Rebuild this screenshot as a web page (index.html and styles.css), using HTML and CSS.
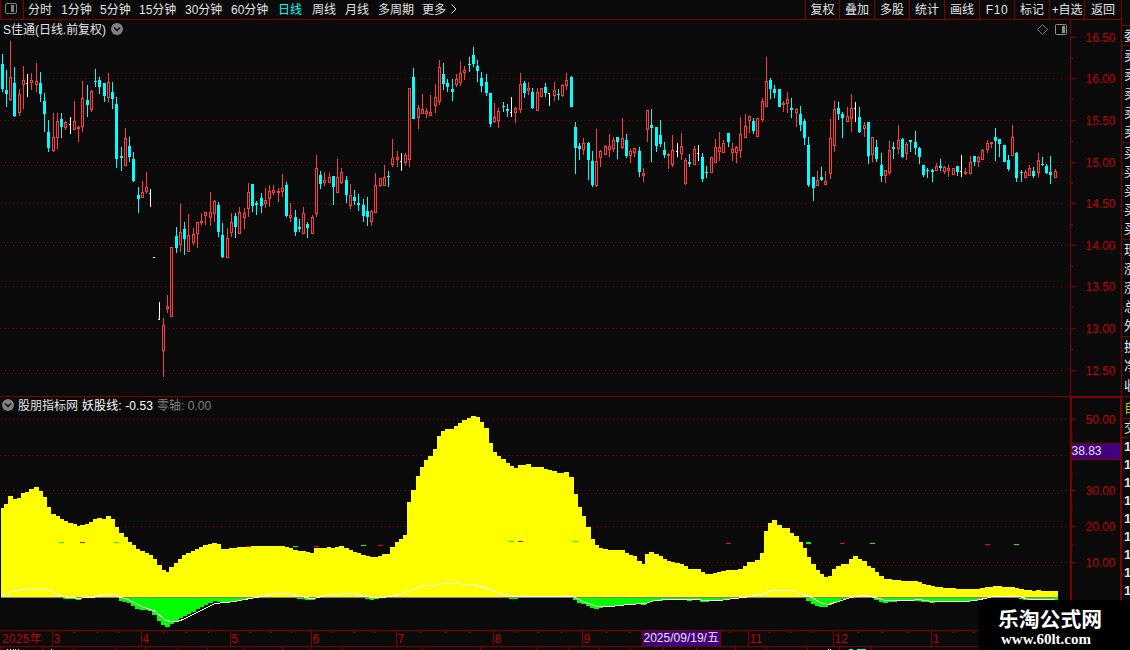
FILE: index.html
```html
<!DOCTYPE html>
<html lang="zh-CN">
  <head>
    <meta charset="UTF-8" />
    <title>S佳通 日线</title>
    <link rel="stylesheet" href="styles.css">
  </head>
  <body>
    <div class="app">
      <main class="main">
        <nav class="toolbar">
          <div class="layout-btn">
            <svg width="14" height="12" viewBox="0 0 14 12">
              <rect x="1.5" y=".5" width="11" height="10" rx="1.5" fill="none" stroke="#808080" />
              <rect x="7" y="2" width="3" height="7" fill="#808080" />
            </svg>
          </div>
          <ul class="periods">
            <li>分时</li>
            <li>1分钟</li>
            <li>5分钟</li>
            <li>15分钟</li>
            <li>30分钟</li>
            <li>60分钟</li>
            <li class="active">日线</li>
            <li>周线</li>
            <li>月线</li>
            <li>多周期</li>
            <li>更多</li>
            <li><svg width="7" height="10" viewBox="0 0 7 10"><path d="M1.5 .5L6 5 1.5 9.5" fill="none" stroke="#d8d8d8" /></svg></li>
          </ul>
          <ul class="tools">
            <li>复权</li>
            <li>叠加</li>
            <li>多股</li>
            <li>统计</li>
            <li>画线</li>
            <li class="latin">F10</li>
            <li>标记</li>
            <li class="tight">+自选</li>
            <li>返回</li>
          </ul>
        </nav>

        <section class="panel price">
          <div class="plot">
            <header class="title">
              <span>S佳通</span><span class="adj">(日线.前复权)</span>
              <svg class="drop" width="12" height="12" viewBox="0 0 12 12">
                <circle cx="6" cy="6" r="6" fill="#808080" />
                <path d="M3 4.5l3 3 3-3" fill="none" stroke="#0a0a0a" stroke-width="1.4" />
              </svg>
              <span class="corner">
                <svg width="11" height="11" viewBox="0 0 11 11"><path d="M5.5 .5l5 5-5 5-5-5z" fill="none" stroke="#808080" /></svg>
                <svg width="12" height="11" viewBox="0 0 12 11">
                  <rect x=".5" y=".5" width="11" height="10" rx="1" fill="none" stroke="#909090" />
                  <rect x="7" y="2" width="3" height="7" fill="#909090" />
                </svg>
              </span>
            </header>
            <svg id="candles" width="1070" height="358" viewBox="0 38 1070 358"></svg>
          </div>
          <svg id="priceAxis" class="axis" width="52" height="376" viewBox="1070 20 52 376"></svg>
        </section>

        <section class="panel indicator">
          <div class="plot">
            <header class="title">
              <svg class="drop" width="12" height="12" viewBox="0 0 12 12">
                <circle cx="6" cy="6" r="6" fill="#808080" />
                <path d="M3 4.5l3 3 3-3" fill="none" stroke="#0a0a0a" stroke-width="1.4" />
              </svg>
              <span class="name">股朋指标网</span>
              <span class="line1">妖股线: -0.53</span>
              <span class="line2">零轴: 0.00</span>
            </header>
            <svg id="area" width="1070" height="217" viewBox="0 413 1070 217"></svg>
          </div>
          <svg id="indAxis" class="axis" width="52" height="234" viewBox="1070 396 52 234"></svg>
        </section>

        <svg id="timeline" width="1122" height="20" viewBox="0 630 1122 20"></svg>
      </main>

      <aside class="quote">
        <ul class="h20"><li>委</li></ul>
        <ul class="h97"><li>卖</li><li>卖</li><li>卖</li><li>卖</li><li>卖</li></ul>
        <ul class="h97"><li>买</li><li>买</li><li>买</li><li>买</li><li>买</li></ul>
        <ul class="h97"><li>现</li><li>涨</li><li>涨</li><li>总</li><li>外</li></ul>
        <ul class="h60"><li>换</li><li>净</li><li>收</li></ul>
        <ul class="h22 own"><li>自</li></ul>
        <ul class="h19"><li>交</li></ul>
        <ul class="ticks"><li>1</li><li>1</li><li>1</li><li>1</li><li>1</li><li>1</li><li>1</li><li>1</li><li>1</li></ul>
      </aside>
    </div>

    <div class="brand">
      <strong>乐淘公式网</strong>
      <b>www.60lt.com</b>
    </div>

    <script src="chart.js"></script>
  </body>
</html>
```
FILE: styles.css
```css
* {
  box-sizing: border-box;
}
body {
  margin: 0;
  background: #0a0a0a;
  color: #e4e4e4;
  font: 12px/19px "Liberation Sans", "Noto Sans CJK SC", sans-serif;
  overflow: hidden;
}
ul {
  margin: 0;
  padding: 0;
  list-style: none;
}
svg {
  display: block;
}
.app {
  display: grid;
  grid-template-columns: 1122px 8px;
  width: 1130px;
  height: 650px;
  overflow: hidden;
}
.main {
  display: flex;
  flex-direction: column;
}

/* toolbar */
.toolbar {
  display: flex;
  height: 20px;
  border-bottom: 1px solid #800000;
  border-left: 1px solid #800000;
  border-right: 1px solid #800000;
}
.toolbar li {
  line-height: 21px;
  height: 19px;
}
.layout-btn {
  width: 23px;
  padding: 3px 0 0 3px;
  border-right: 1px solid #800000;
}
.periods {
  display: grid;
  grid-template-columns: 33px 39px 39px 46px 46px 47px 34px 33px 33px 44px 28px 8px;
  padding-left: 4px;
  white-space: nowrap;
}
.periods svg {
  margin-top: 4px;
}
.active {
  color: #00ffff;
}
.tools {
  display: grid;
  grid-template-columns: 34px repeat(7, 35px) 37px;
  margin-left: auto;
  text-align: center;
  white-space: nowrap;
}
.tools li {
  border-left: 1px solid #800000;
}
.tools .latin {
  letter-spacing: 0.6px;
}
.tools .tight {
  letter-spacing: -0.2px;
}

/* chart panels */
.panel {
  display: flex;
}
.plot {
  width: 1070px;
}
.title {
  display: flex;
  align-items: center;
  height: 18px;
  padding-left: 3px;
  white-space: nowrap;
}
.title > span {
  line-height: 16px;
  padding-top: 2px;
}
.adj {
  letter-spacing: -0.05px;
}
.price .drop {
  margin-left: 5px;
}
.title > .corner {
  display: flex;
  gap: 7px;
  margin-left: auto;
  padding: 0 3px 0 0;
}
.indicator .plot {
  border-top: 1px solid #800000;
}
.indicator .title {
  height: 16px;
  padding-left: 2px;
}
.name {
  margin-left: 4px;
}
.line1 {
  margin-left: 4px;
  color: #fff;
  letter-spacing: 0.1px;
}
.line2 {
  margin-left: 4px;
  color: #808080;
}
.axis text,
#timeline text {
  font-size: 12px;
  fill: #c00000;
}
.axis .cursor,
#timeline .cursor {
  fill: #e4e4e4;
}
#timeline text {
  letter-spacing: 0.2px;
}
#timeline .cursor {
  letter-spacing: 0;
}

/* quote column, cut off by the window edge */
.quote {
  padding-top: 25px;
  overflow: hidden;
}
.quote ul {
  display: flex;
  flex-direction: column;
  justify-content: space-around;
  border-top: 1px solid #800000;
  padding-left: 2px;
}
.quote li {
  width: 13px;
  font-size: 13px;
  line-height: 16px;
}
.h20 { height: 20px; }
.h97 { height: 97px; }
.h60 { height: 60px; }
.h22 { height: 22px; }
.h19 { height: 19px; }
.quote .own {
  color: #c0c000;
}
.quote .ticks {
  height: 163px;
}
.ticks li {
  font-weight: bold;
}

/* site label over the bottom right corner */
.brand {
  position: absolute;
  left: 978px;
  top: 600px;
  width: 152px;
  height: 50px;
  padding: 5px 8px 0 0;
  background: #000;
  color: #fff;
  text-align: center;
}
.brand strong {
  display: block;
  font: bold 20.8px/26px "Noto Sans CJK SC", sans-serif;
}
.brand b {
  display: block;
  margin-right: 8px;
  font: bold 15px/16px "Liberation Serif", serif;
}
```
FILE: chart.js
```js
const RED = "#ff3c3c";
const CYAN = "#00ffff";
const GRID = "#800000";

// type, high, body top, body bottom, low (u = up, d = down, w = flat)
const candles = `
d 54 64 89 92|d 70 90 94 107|u 41 77 100 101|d 67 83 116 117|u 89 94 113 116|u 66 80 85 109|w 74 83 84 97|u 73 80 83 90
u 63 81 85 92|d 72 83 94 102|d 93 101 114 132|d 120 132 148 152|u 113 137 151 152|u 113 121 138 149|d 113 119 127 138|u 121 122 128 130
w 117 124 125 134|u 101 121 130 130|u 126 127 129 142|u 81 98 127 132|d 85 100 105 117|u 90 91 110 112|d 69 81 82 87|d 77 80 87 94
d 83 83 96 102|u 73 82 98 102|d 82 92 99 109|d 97 104 159 168|d 147 156 158 171|u 128 138 166 166|d 137 146 157 162|d 152 159 181 182
d 187 195 199 213|u 181 192 198 198|u 172 187 192 194|w 189 193 194 207|w 257 257 258 258|w 302 319 320 320|u 318 325 351 377|u 295 306 309 313
u 247 247 317 317|d 227 236 248 253|u 204 232 245 252|d 222 229 239 255|u 214 235 252 252|u 228 234 243 245|u 222 222 234 248|u 213 221 223 225
u 212 212 216 225|u 192 212 218 226|u 200 201 214 222|d 202 205 232 237|d 223 235 257 258|u 228 238 258 258|u 213 222 233 237|d 213 216 227 238
u 207 212 234 234|u 208 213 218 229|u 183 192 209 217|d 184 184 206 212|d 201 203 205 215|d 193 198 206 213|u 188 200 204 208|u 185 191 199 207
u 185 190 193 195|u 188 191 193 202|u 174 188 192 197|d 182 185 216 217|u 203 215 218 222|d 210 217 232 236|d 219 227 229 232|u 207 213 234 234
d 222 224 228 238|u 215 217 234 234|u 155 168 214 217|d 171 175 184 189|u 172 180 183 186|u 173 177 183 183|d 176 176 187 205|u 159 177 193 193
u 168 172 183 184|d 176 180 195 203|u 184 195 206 209|d 190 197 201 205|d 194 203 205 211|d 199 205 216 222|d 197 211 217 226|u 210 211 222 226
u 173 185 213 213|u 178 178 186 187|u 165 177 186 186|d 171 176 177 187|u 139 158 165 167|u 151 157 160 167|w 153 161 162 171|u 153 155 163 166
u 88 88 160 167|d 68 77 119 119|u 105 108 118 129|u 94 109 114 114|u 108 111 114 118|u 95 112 116 116|u 84 97 106 113|u 60 67 102 105
d 63 74 84 90|d 79 83 87 92|d 79 89 92 101|u 74 79 85 87|u 61 73 83 86|u 66 70 73 80|d 57 64 65 72|d 47 55 64 67
d 60 66 71 82|d 72 78 86 92|d 74 82 93 96|d 93 93 124 127|u 103 117 122 123|u 108 111 121 128|d 102 106 107 112|d 104 109 111 117
w 97 112 113 117|u 107 108 113 123|u 73 84 110 113|d 81 83 93 98|u 82 88 91 95|d 88 92 108 109|u 88 92 111 111|u 88 88 97 97
d 83 87 93 97|w 93 93 94 106|u 82 90 96 101|d 89 94 95 100|u 84 85 96 97|u 73 80 86 90|d 76 77 107 107|d 122 127 148 174
d 143 146 149 160|u 138 143 150 155|d 142 143 160 180|d 151 161 185 187|u 129 161 186 187|u 150 151 158 167|u 145 146 155 155|u 134 146 150 157
u 137 140 149 152|d 137 137 142 159|u 118 138 148 149|d 134 140 156 158|u 149 151 156 163|u 148 148 153 157|d 147 151 172 177|u 168 173 176 182
u 110 110 130 142|d 109 125 128 162|d 127 127 146 152|d 120 135 144 147|d 142 150 155 158|u 153 154 156 169|u 135 150 165 167|w 143 151 152 157
u 133 146 154 160|u 158 160 184 185|d 154 162 164 167|u 146 149 165 165|w 145 153 154 161|d 153 157 179 182|d 166 172 173 178|u 157 157 173 173
u 139 147 163 163|u 132 147 152 161|u 140 143 153 153|d 133 133 142 147|u 143 149 153 161|u 146 147 153 163|u 117 134 151 158|u 114 126 138 138
u 116 116 121 133|d 118 121 131 134|u 118 118 137 137|u 98 101 120 122|u 57 81 107 107|d 78 80 89 99|d 85 89 93 98|d 89 89 107 107
u 101 103 105 112|u 92 99 104 113|d 98 108 110 118|u 108 109 113 127|d 106 114 125 131|d 119 121 138 145|d 137 145 185 187|d 177 177 188 201
u 171 180 186 186|d 167 177 180 181|u 171 181 185 185|u 119 138 174 179|u 101 109 146 152|d 102 108 114 120|d 112 114 118 138|u 107 116 122 122
u 94 108 119 132|w 102 108 109 122|d 107 117 132 133|u 122 125 129 137|d 122 122 156 164|u 137 137 155 162|d 140 147 159 162|d 153 165 176 182
u 170 170 176 183|u 141 150 173 175|d 142 147 149 159|u 125 140 149 154|d 138 139 157 158|u 142 144 154 160|d 140 140 142 152|d 131 142 148 155
d 147 148 157 164|d 165 165 175 177|d 168 170 171 178|d 169 170 172 182|u 163 166 171 171|d 159 166 168 171|u 166 167 172 174|u 165 168 171 177
u 168 168 175 175|d 166 166 172 176|w 155 171 172 177|u 168 172 174 175|u 156 162 174 174|d 156 156 162 166|u 156 157 162 167|u 149 150 160 160
u 140 143 150 153|u 142 142 144 148|d 128 137 141 161|d 139 139 144 157|d 145 145 162 162|d 155 160 169 171|u 125 137 156 156|d 152 153 178 182
d 170 172 173 182|u 170 172 178 178|u 165 168 176 176|d 167 171 176 178|u 153 160 173 177|d 157 164 165 166|d 164 166 173 174|d 156 172 175 184
u 169 171 178 178`;

// "x,top" pairs, each step runs to the next x
const yellow = `1,508 4,504 8,496 13,499 17,498 21,493 25,492 29,489 34,487 39,491 43,497 47,507 51,514 56,516 60,519 64,521 68,523 73,524 77,526 80,525 85,524 89,522 93,519 97,518 102,519 106,516 111,519 115,527 119,533 124,537 128,542 132,545 136,549 140,551 145,553 149,555 153,559 157,565 162,570 166,572 169,567 174,563 178,559 182,555 186,553 191,551 195,549 199,547 203,545 208,544 212,543 217,544 221,549 229,548 237,547 251,546 285,547 289,548 293,550 298,551 306,552 310,553 314,548 327,547 331,548 335,547 339,546 344,548 349,550 353,552 357,553 361,555 366,556 370,557 378,556 382,554 390,547 395,542 399,539 403,535 407,502 411,490 416,476 420,467 424,460 428,456 433,449 437,436 441,431 445,429 454,426 458,423 462,420 467,418 471,416 476,417 480,422 484,428 489,443 493,452 497,456 501,459 506,463 510,466 514,468 518,465 526,464 531,467 544,469 548,470 552,471 557,473 564,472 569,477 574,494 578,507 582,516 586,527 591,539 595,545 599,548 603,549 608,550 625,553 629,555 633,556 637,561 642,564 645,554 649,552 654,554 659,556 663,559 667,561 671,562 675,563 680,564 684,566 688,569 701,572 705,574 713,573 717,572 721,571 726,570 738,569 743,566 747,562 755,560 760,553 764,531 768,523 772,520 777,525 782,528 790,533 794,536 799,542 803,548 807,557 811,564 816,570 820,574 824,577 828,576 832,569 836,566 841,564 849,559 853,556 858,559 862,561 867,566 871,568 875,572 879,576 884,579 892,580 901,581 918,582 922,584 926,585 931,586 935,587 943,588 956,589 980,588 985,587 993,586 1002,587 1010,587 1015,588 1019,589 1024,590 1032,591 1036,590 1041,591 1058,597`;

const green = `63,599 76,600 81,597 119,601 123,602 127,603 131,606 135,609 140,610 148,611 152,615 157,621 161,625 165,627 170,624 174,621 179,618 183,616 187,614 191,612 196,609 200,607 204,605 208,603 213,601 217,602 230,601 238,600 246,599 251,597 297,599 305,600 315,597 365,599 370,600 374,599 379,597 509,599 518,597 573,600 577,603 581,604 586,606 590,608 594,609 599,608 603,607 611,606 620,605 628,604 641,605 646,603 650,601 663,600 687,601 692,600 700,602 709,601 721,600 726,599 733,597 806,601 811,604 815,606 819,607 828,605 832,603 837,601 841,599 846,597 874,600 879,602 883,603 888,602 897,601 921,602 930,603 935,602 943,601 973,601 978,599 986,597 1019,599 1023,600 1058,597`;

const white = "1,596 5,593 12,591 20,590 26,588 43,588 50,590 58,594 66,597 74,597 77,598 80,598 84,597 94,597 102,594 115,594 120,597 126,598 132,601 144,607 154,610 160,615 166,620 171,621 178,621 185,618 215,603 235,601 250,598 262,596 275,593 290,593 300,596 308,597 309,598 314,598 318,597 330,594 355,593 366,596 372,597 382,597 390,596 400,594 410,590 420,586 430,585 445,583 475,584 487,588 500,593 512,596 540,596 573,596 577,598 585,602 598,606 611,606 628,604 645,603 655,600 667,599 700,599 702,600 720,600 733,598 745,597 760,594 772,590 793,590 803,594 812,597 820,602 829,604 835,602 842,600 850,597 865,595 874,597 880,598 885,600 910,600 918,599 925,600 933,601 965,601 975,600 985,598 993,596 1019,596 1030,599 1055,599";

const marks = [
  [59, 542, "g"], [80, 542, "r"], [114, 542, "g"], [246, 546, "r"], [293, 546, "g"],
  [314, 546, "r"], [361, 545, "g"], [378, 545, "r"], [509, 541, "g"], [518, 541, "r"],
  [573, 541, "g"], [726, 543, "r"], [806, 542, "g"], [806, 543, "g"], [840, 543, "r"],
  [870, 543, "g"], [985, 544, "r"], [1014, 544, "g"],
];

const rect = (x, y, w, h, fill) => `<rect x="${x}" y="${y}" width="${w}" height="${h}" fill="${fill}"/>`;
const label = (x, y, t, cls = "") => `<text x="${x}" y="${y}" class="${cls}">${t}</text>`;
const dots = (y) =>
  `<path d="M1 ${y + 0.5}H1067" stroke="${GRID}" stroke-dasharray="1 3" shape-rendering="crispEdges"/>`;

function draw(id, parts) {
  document.getElementById(id).innerHTML = parts.join("");
}

function candle(line, i) {
  const [type, ...v] = line.split(" ");
  const [high, top, bottom, low] = v.map(Number);
  const x = Math.floor(2.13 + 4.246 * i);
  if (type === "w") {
    return rect(x, high, 1, low - high, "#fff") + rect(x - 1, top, high === low - 1 ? 2 : 1, 1, "#fff");
  }
  const color = type === "u" ? RED : CYAN;
  let out = rect(x, high, 1, low - high, color) + rect(x - 1, top, 3, bottom - top, color);
  if (type === "u" && bottom - top > 2) {
    out += rect(x, top + 1, 1, bottom - top - 2, "#0a0a0a");
  }
  return out;
}

function steps(data, fill) {
  const pts = data.split(" ").map((p) => p.split(",").map(Number));
  let d = `M${pts[0][0]} 597`;
  pts.forEach(([x, y]) => (d += `H${x}V${y}`));
  return `<path d="${d}V597Z" fill="${fill}" shape-rendering="crispEdges"/>`;
}

const priceY = [37, 78, 120, 162, 203, 245, 286, 328, 370];
draw("candles", [
  ...priceY.slice(1).map(dots),
  ...candles.trim().split(/[|\n]/).map(candle),
]);

draw("priceAxis", [
  rect(1070, 20, 1, 376, GRID),
  rect(1121, 20, 1, 376, GRID),
  ...priceY.map((y, i) => rect(1071, y, 5, 1, GRID) + label(1085.5, y + 5, (16.5 - i * 0.5).toFixed(2))),
  ...[58, 99, 141, 183, 224, 266, 307, 349].map((y) => rect(1071, y, 2, 1, GRID)),
]);

draw("area", [
  ...[419, 455, 490, 526, 562].map(dots),
  steps(yellow, "#ffff00"),
  steps(green, "#00ff00"),
  rect(1, 597, 1054, 1, "#808080"),
  `<polyline points="${white}" transform="translate(0 .5)" fill="none" stroke="#fff" shape-rendering="crispEdges"/>`,
  ...marks.map(([x, y, c]) => rect(x, y, 5, 1, c === "g" ? "#00ff00" : "#ff0000")),
]);

draw("indAxis", [
  rect(1070, 396, 52, 2, GRID),
  rect(1070, 396, 2, 234, GRID),
  rect(1120, 396, 2, 234, GRID),
  ...[[419, "50.00"], [490, "30.00"], [526, "20.00"], [562, "10.00"]].map(
    ([y, t]) => rect(1072, y, 4, 1, GRID) + label(1085.5, y + 5, t)
  ),
  ...[437, 473, 508, 544].map((y) => rect(1072, y, 1, 1, GRID)),
  rect(1072, 443, 48, 17, GRID),
  rect(1072, 444, 48, 15, "#400080"),
  label(1071.5, 455, "38.83", "cursor"),
]);

const months = [[52, "3"], [141, "4"], [230, "5"], [311, "6"], [396, "7"], [493, "8"], [582, "9"], [748, "11"], [833, "12"], [931, "1"]];
draw("timeline", [
  rect(0, 630, 1122, 1, GRID),
  rect(0, 646, 1122, 1, GRID),
  label(2, 643, "2025年"),
  ...months.map(([x, t]) => rect(x, 631, 1, 15, GRID) + label(x + 1.5, 643, t)),
  ...[74, 97, 119, 163, 186, 208, 250, 271, 291, 332, 354, 375, 420, 445, 469, 515, 538, 561, 606, 629, 730, 769, 791, 812, 858, 882, 907, 952, 973].map(
    (x) => rect(x, 631, 1, 2, GRID)
  ),
  ...[0, 42, 73, 115, 145, 177, 207, 244, 282, 310, 342, 422, 480, 536, 568, 599, 630, 663, 696, 735, 766, 807, 839, 871].map(
    (x) => rect(x, 647, 1, 3, GRID)
  ),
  rect(642, 631, 79, 15, GRID),
  rect(643, 631, 77, 15, "#400080"),
  label(643.5, 642, "2025/09/19/五", "cursor"),
  // tops of the status row below the window edge
  ...[7, 10, 13, 15, 18, 51, 828, 830].map((x) => rect(x, 649, 1, 1, "#e4e4e4")),
  rect(849, 649, 4, 1, CYAN),
  rect(857, 649, 9, 1, CYAN),
]);
```
